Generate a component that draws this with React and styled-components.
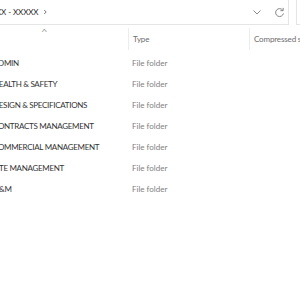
import React from "react";
import styled, { createGlobalStyle } from "styled-components";

const GlobalStyle = createGlobalStyle`
  html, body {
    margin: 0;
    padding: 0;
    background: #ffffff;
    overflow: hidden;
  }
  body {
    font-family: Lato, "Open Sans", sans-serif;
    width: 300px;
    height: 300px;
  }
`;

const folders = [
  "ADMIN",
  "HEALTH & SAFETY",
  "DESIGN & SPECIFICATIONS",
  "CONTRACTS MANAGEMENT",
  "COMMERCIAL MANAGEMENT",
  "SITE MANAGEMENT",
  "O&M",
];

const App = () => {
  return (
    <>
      <GlobalStyle />
      <Window>
        <TopBar>
          <AddressBox>
            <Crumb>XX - XXXXX</Crumb>
            <Sep>
              <svg width="6" height="8" viewBox="0 0 6 8">
                <path d="M2.2 2 L4.2 4 L2.2 6" fill="none" stroke="#666" strokeWidth="0.9" />
              </svg>
            </Sep>
            <Spacer />
            <IconBtn>
              <svg width="10" height="10" viewBox="0 0 10 10">
                <path d="M1.5 3.5 L5 7 L8.5 3.5" fill="none" stroke="#8a8a8a" strokeWidth="1" />
              </svg>
            </IconBtn>
            <IconBtn $last>
              <svg width="11" height="11" viewBox="0 0 12 12">
                <path
                  d="M9.6 3.6 A4.3 4.3 0 1 0 10.3 7"
                  fill="none"
                  stroke="#7a7a7a"
                  strokeWidth="1"
                />
                <path d="M10 1 L10 4 L7 4" fill="none" stroke="#7a7a7a" strokeWidth="1" />
              </svg>
            </IconBtn>
          </AddressBox>
          <SearchBox />
        </TopBar>
        <Header>
          <NameHead>
            <Caret>^</Caret>
          </NameHead>
          <HeadCell>Type</HeadCell>
          <HeadCell>Compressed size</HeadCell>
        </Header>
        <List>
          {folders.map((f) => (
            <Row key={f}>
              <NameCell>{f}</NameCell>
              <TypeCell>File folder</TypeCell>
            </Row>
          ))}
        </List>
      </Window>
    </>
  );
};

const Window = styled.div`
  width: 300px;
  height: 300px;
  overflow: hidden;
  background: #fff;
`;

const TopBar = styled.div`
  display: flex;
  gap: 7px;
  height: 25px;
  margin-left: -14px;
`;

const AddressBox = styled.div`
  display: flex;
  align-items: center;
  width: 303px;
  flex-shrink: 0;
  border: 1px solid #e5e5e5;
  border-top: none;
  box-sizing: border-box;
  padding-left: 9px;
  padding-right: 0;
  font-size: 8px;
  color: #2a2a2a;
`;

const Crumb = styled.span`
  letter-spacing: -0.1px;
`;

const Sep = styled.span`
  display: flex;
  margin-left: 4px;
`;

const Spacer = styled.div`
  flex: 1;
`;

const IconBtn = styled.div`
  width: ${(p) => (p.$last ? "18px" : "20px")};
  margin-left: ${(p) => (p.$last ? "3px" : "0")};
  display: flex;
  justify-content: center;
  align-items: center;
`;

const SearchBox = styled.div`
  width: 60px;
  flex-shrink: 0;
  border: 1px solid #e5e5e5;
  border-top: none;
`;

const Header = styled.div`
  display: grid;
  grid-template-columns: 128px 121px 120px;
  height: 22px;
  margin-top: 3px;
  font-size: 8px;
  color: #6d6d6d;
`;

const NameHead = styled.div`
  position: relative;
`;

const Caret = styled.span`
  position: absolute;
  left: 42px;
  top: -1px;
  font-size: 8px;
  color: #9a9a9a;
  transform: scaleX(1.4);
`;

const HeadCell = styled.div`
  border-left: 1px solid #ececec;
  padding-left: 4px;
  display: flex;
  align-items: center;
  white-space: nowrap;
  letter-spacing: -0.15px;
`;

const List = styled.div`
  display: flex;
  flex-direction: column;
  padding-top: 2px;
`;

const Row = styled.div`
  display: grid;
  grid-template-columns: 139px 1fr;
  height: 21px;
  align-items: center;
  font-size: 8px;
  margin-left: -7px;
`;

const NameCell = styled.div`
  color: #333333;
  white-space: nowrap;
  overflow: hidden;
  letter-spacing: -0.3px;
`;

const TypeCell = styled.div`
  color: #808080;
`;

export default App;
